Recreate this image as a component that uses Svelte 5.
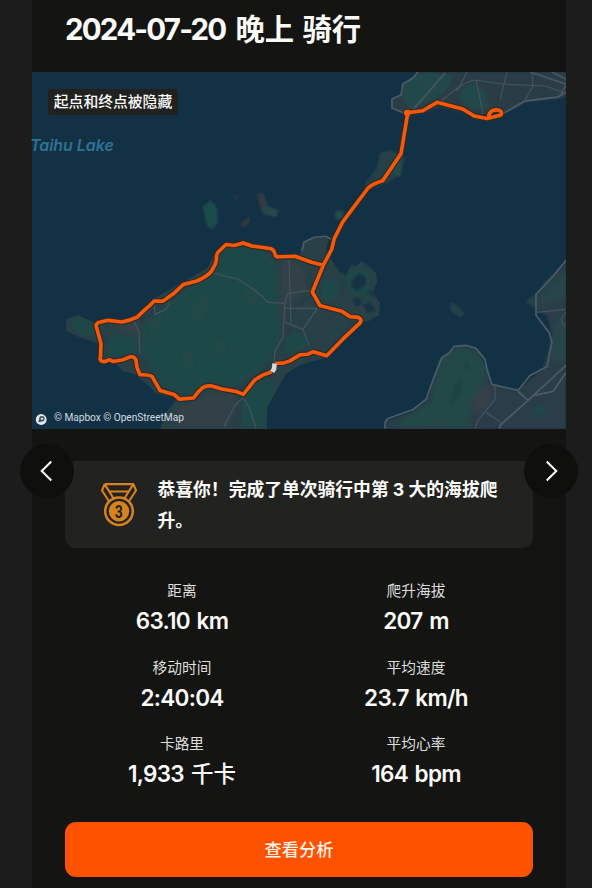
<script>
  const stats = [
    { label: '距离', value: '63.10 km' },
    { label: '爬升海拔', value: '207 m' },
    { label: '移动时间', value: '2:40:04' },
    { label: '平均速度', value: '23.7 km/h' },
    { label: '卡路里', value: '1,933', unit: '千卡' },
    { label: '平均心率', value: '164 bpm' }
  ];

  const route =
    'M271.7 371.3 L262 375 L255 379.3 L243.3 394 L236 391 L222 388.5 L211.7 385.5 Q206 385 203 387 Q198 391 193.5 397.5 L179.3 398.7 L174 394 L160 390 L152 376 Q149 374 140 374.3 L137 367 L136 359.5 Q134 355.5 130 356.5 L123.3 359.3 L113 361 L109.5 359.3 L104 361.3 Q99 361 100.5 357 L101 343 L96.5 327 Q95 323 99.5 322 L108.3 320 L121.7 321.7 Q130 320 137.3 316.7 L145 309.3 L150 305 L154 300.8 L163 300.8 L173.3 293.5 L183.3 284.2 L196.7 280.7 Q206 277 211 271.5 Q216 264 216.5 259 Q216 253 219 251 L226 244.3 L234 245.3 L243.3 242.7 L251.7 245.7 L270 248.3 Q274 249 275 254 Q275.5 257 279 256.5 L295 256 L311.7 262 L323.3 265 L312.3 291.7 L320 305.3 L341.7 311 L350 316.3 L358.3 317 Q363 319.5 359.5 323 L343.3 338.3 L326.7 355.3 L313.3 351.3 L308 353.8 L300 354.3 L290 360.5 L283.3 362.7 L275.3 362.9 M323.3 265 L331.7 249 L334.3 238.3 L342.7 221.7 L367.7 188.3 Q372 183.5 382.7 180.5 L401 153.5 L407.7 113.3 L406 112 L409 112.5 L422.7 110.7 L437 102.3 L462.7 109 L474.3 116 L487 118.5 L501 115 Q503 111 498 110 Q490 109 488.5 116.5';

  const water = '#123145';
</script>

<div class="page">
  <main class="panel">
    <h1><span class="date">2024-07-20</span> 晚上 骑行</h1>

    <div class="map">
      <svg viewBox="32 72 534 356" preserveAspectRatio="none">
        <defs>
          <filter id="soft" x="-20%" y="-20%" width="140%" height="140%"><feGaussianBlur stdDeviation="2.5" /></filter>
          <filter id="edge"><feGaussianBlur stdDeviation="0.8" /></filter>
          <clipPath id="island">
            <path d="M96 323L121 321L145 309L154 298L183 282L207 268L216 251L226 243L270 247L278 255L300 254L303 241L314 237L329 237L326 250L333 262L340 272L347 272L352 264L356 266L362 261L369 266L376 273L377 282L373 292L380 303L379 315L368 321L360 321L345 340L327 357L301 364L286 373L276 391L267 407L267 429L160 429L166 412L177 398L157 393L136 374L122 370L114 361L98 360L101 344L90 340L77 336L66 330L66 319L78 315Z" />
          </clipPath>
        </defs>
        <rect x="32" y="72" width="534" height="357" fill={water} />

        <g clip-path="url(#island)" filter="url(#edge)">
          <rect x="60" y="230" width="330" height="200" fill="#293f47" />
          <g filter="url(#soft)" fill="#1f4a47">
            <path d="M218 252L232 247L260 250L275 262L282 301L278 345L262 367L235 386L215 382L190 394L164 386L154 371L142 351L142 326L165 307L190 288L213 276Z" />
            <path d="M69 319L89 318L98 337L80 334Z M110 335L137 333L137 351L106 358Z" />
            <path d="M285 337L299 331L308 339L302 350L285 354Z M323 280L341 281L335 300L322 302Z M345 271L368 269L369 298L350 292Z M243 395L270 375L275 390L263 428L242 425Z" />
            <path d="M324 342L345 314L350 325L332 348Z" opacity=".35" />
          </g>
          <g filter="url(#soft)" fill="#344047" opacity=".7">
            <path d="M280 256L304 264L309 291L291 302L284 330L277 307Z M176 406L215 391L239 395L229 428L174 428Z M110 322L138 320L144 340L119 332Z" />
            <path d="M191 304L206 289L213 304L203 322L188 321Z M216 339L226 333L228 353L211 360Z M150 318L163 312L160 330L148 340Z M240 290L258 282L262 300L248 310Z M180 352L192 346L196 368L182 372Z M240 262L250 258L246 274Z" opacity=".35" />
          </g>
          <g fill={water}>
            <path d="M352 280L359 273L366 277L366 284L358 291L351 286Z M363 305L370 302L376 310L368 313Z M352 299L358 297L362 303L356 306Z" />
            <path d="M340 272L350 268L346 276Z M366 291L380 290L373 297Z" opacity=".6" />
          </g>
        </g>

        <g filter="url(#edge)">
          <path d="M391 100L401 94L402 84L413 77L418 72L566 72L566 97L553 99L526 102L500 115L473 115L440 107L421 114L407 115L391 108Z" fill="#2b3c46" />
          <path d="M403 98L403 84L416 75L425 72L453 75L446 90L432 101L411 109Z M461 90L473 84L484 91L489 108L472 109L459 100Z" fill="#224a48" />
          <path d="M380 153L391 150L405 157L401 172L391 181L375 187L364 185L377 167Z" fill="#263f49" />
          <path d="M393 164L402 160L401 176L394 176Z M335 211L343 210L344 217L336 220Z" fill="#214b49" />
          <path d="M203 206L211 200L217 208L218 222L213 229L207 226Z" fill="#1e4c4d" />
          <path d="M257 194L263 193L268 206L279 210L276 217L263 214Z" fill="#27464c" />
          <path d="M257 194L262 193L266 208L260 208Z M234 198L239 193L236 200Z M240 223L250 216L249 224L243 227Z" fill="#353742" />
          <path d="M450 302L457 305L465 314L460 317L451 311Z" fill="#24434b" />
          <path d="M384 429L386 420L410 412L425 402L435 374L442 357L458 345L477 349L487 366L491 383L516 391L543 368L552 335L547 315L536 310L534 302L544 282L566 261L566 429Z" fill="#2b3e48" />
          <path d="M525 301L536 293L537 310Z" fill="#243f49" />
        </g>
        <g filter="url(#soft)">
          <path d="M440 360L459 346L477 352L487 370L482 387L471 401L469 427L391 425L412 413L431 402Z" fill="#204847" />
          <path d="M538 298L566 268L566 296L539 307Z M555 322L566 318L566 360L550 365Z" fill="#264548" />
          <path d="M474 393L490 384L492 400L481 414L472 410Z" fill="#343f49" />
          <circle cx="539" cy="410" r="5" fill="#194c4d" />
          <path d="M455 385L463 375L459 397L449 407Z M465 356L470 366L465 374Z" fill="#1a4042" />
        </g>

        <g class="coast">
          <path d="M418 72L413 78L403 84L401 95L392 99L392 108L406 114" />
          <path d="M504 113L525 101L540 99L558 97L566 92" />
          <path d="M302 251L304 242L314 237L326 236L331 239" />
          <path d="M566 260L554 275L536 294L536 315L549 332L552 342L547 366L530 375L518 390L492 384L487 369L485 359L476 348L466 345L454 346L449 353L442 357L434 377L426 399L413 409L388 418Q384 421 385 428" />
          <path d="M518 391L528 400L501 424L499 428M566 365L528 400M566 372L553 391L534 395" />
        </g>
        <g class="roads">
          <path d="M467 72L460 86L441 101M456 91Q463 82 475 80L502 84L545 86L566 93M476 80L480 98L483 114M507 72L500 100M532 72L533 86L525 100" />
          <path d="M445 73L411 112M530 72L566 84M552 72L566 79M560 96L566 85" stroke-width="2" />
          <path d="M536 312L566 309M566 312L561 319L564 326M495 385L495 399L478 420L475 428M486 412L501 422" />
          <path d="M210 272L238 279L255 290L268 302L284 303M289 260L291 323M311 290L288 293L285 301L283 337L275 351L274 362M285 308L317 308L303 329L285 322M303 329L309 345M243 397L235 405L224 426M243 397L249 407L256 427" />
          <path d="M134 321L139 332L140 354M154 302L155 314L166 309L170 302" />
        </g>

        <path class="casing" d={route} />
        <path class="track" d={route} />
        <path d="M272.2 371.5L274 368.5L274.6 363.2" fill="none" stroke="#d9d9d7" stroke-width="4.6" />
        <circle cx="407.3" cy="113" r="3.2" fill="#f95809" />

        <g transform="translate(41.2 419)">
          <circle r="5.4" fill="#e3e8eb" />
          <circle cx=".7" cy="-.7" r="2.7" fill="#364954" />
          <path d="M-2.8 2.8L-1.8 -1L1 1.8Z" fill="#364954" />
          <path d="M.8 -2.7L1.4 -1.3L2.8 -.7L1.4 -.1L.8 1.3L.2 -.1L-1.2 -.7L.2 -1.3Z" fill="#e3e8eb" />
        </g>
      </svg>
      <span class="hidden-note">起点和终点被隐藏</span>
      <span class="lake">Taihu Lake</span>
      <span class="credit">© Mapbox © OpenStreetMap</span>
    </div>

    <section class="award">
      <svg class="medal" viewBox="0 0 38 46" width="38" height="46" fill="none" stroke="#d5821f" stroke-width="2.1">
        <path d="M4.6 2.1H33.4L36 8.5L29 19.2M4.6 2.1L2 8.5L9 19.2M4.6 2.1L13.8 16.8M33.4 2.1L24.2 16.8M9 9.5H29" stroke-linejoin="round" />
        <circle cx="19" cy="29.2" r="13.8" stroke-width="2.5" />
        <circle cx="19" cy="29.2" r="10.2" fill="#d5821f" stroke="none" />
        <text transform="translate(18.8 35.5) scale(.8 1)" text-anchor="middle">3</text>
      </svg>
      <p>恭喜你！完成了单次骑行中第 3 大的海拔爬升。</p>
    </section>

    <dl>
      {#each stats as stat}
        <div class="stat">
          <dt>{stat.label}</dt>
          <dd>{stat.value}{#if stat.unit}<span class="unit">{stat.unit}</span>{/if}</dd>
        </div>
      {/each}
    </dl>

    <button class="analyze">查看分析</button>
  </main>

  <button class="nav prev" aria-label="上一个">
    <svg width="54" height="54" viewBox="0 0 54 54"><path d="M31.3 17.5L21.7 27L31.3 36.5" /></svg>
  </button>
  <button class="nav next" aria-label="下一个">
    <svg width="54" height="54" viewBox="0 0 54 54"><path d="M22.7 17.5L32.3 27L22.7 36.5" /></svg>
  </button>
</div>

<style>
  :global(body) {
    background: #1c1c1c;
  }
  .page {
    position: relative;
    box-sizing: border-box;
    width: 592px;
    height: 888px;
    padding: 0 26px 0 32px;
    overflow: hidden;
    background: #1c1c1c;
    color: #fafaf8;
    font-family: Inter, 'Noto Sans CJK SC', sans-serif;
  }
  .panel {
    display: flex;
    flex-direction: column;
    height: 888px;
    background: #141412;
  }
  h1 {
    flex: none;
    box-sizing: border-box;
    height: 72px;
    margin: 0;
    padding: 7px 33px 0;
    font-size: 29.3px;
    line-height: 44px;
    font-weight: 700;
    word-spacing: 1.5px;
    white-space: nowrap;
  }
  .date {
    margin-right: 1.5px;
    font-size: 29.5px;
    letter-spacing: -1.8px;
  }
  .map {
    position: relative;
    flex: none;
    height: 356.5px;
  }
  .map > svg {
    display: block;
    width: 100%;
    height: 100%;
  }
  .coast,
  .roads {
    fill: none;
    stroke: #4c5b67;
    stroke-width: 1.7;
    stroke-linejoin: round;
  }
  .roads {
    stroke: #44535d;
    stroke-width: 1.2;
  }
  .casing,
  .track {
    fill: none;
    stroke-linejoin: round;
  }
  .casing {
    stroke: #302a25;
    stroke-width: 6;
    opacity: 0.85;
  }
  .track {
    stroke: #f95809;
    stroke-width: 3.6;
  }
  .hidden-note {
    position: absolute;
    left: 16px;
    top: 17px;
    width: 130px;
    height: 26px;
    border-radius: 3px;
    background: #212220;
    font-size: 14.8px;
    font-weight: 500;
    line-height: 26px;
    text-align: center;
    white-space: nowrap;
  }
  .lake {
    position: absolute;
    left: -2px;
    top: 63px;
    color: #2e7394;
    font-size: 16px;
    font-style: italic;
    font-weight: 600;
    line-height: 20px;
    letter-spacing: -0.05px;
    white-space: nowrap;
  }
  .credit {
    position: absolute;
    left: 22px;
    top: 338px;
    color: #d4dce0;
    font-family: Roboto, sans-serif;
    font-size: 10.2px;
    line-height: 16px;
    letter-spacing: -0.05px;
    white-space: nowrap;
  }
  .award {
    flex: none;
    display: flex;
    box-sizing: border-box;
    height: 87px;
    margin: 32.5px 33px 0;
    padding: 14px 20px 0 35px;
    border-radius: 11px;
    background: #222220;
  }
  .medal {
    flex: none;
    margin-top: 7px;
  }
  .medal text {
    fill: #222220;
    stroke: none;
    font: 700 17.5px Roboto, sans-serif;
  }
  .award p {
    margin: 0 0 0 19.5px;
    width: 345px;
    font-size: 17.8px;
    line-height: 30.5px;
    font-weight: 700;
  }
  dl {
    flex: none;
    display: grid;
    grid-template-columns: 1fr 1fr;
    margin: 30px 33px 0;
  }
  .stat {
    height: 76.7px;
    text-align: center;
  }
  dt {
    color: #dededc;
    font-size: 14.7px;
    line-height: 26px;
  }
  dd {
    margin: 1px 0 0;
    font-size: 22.5px;
    line-height: 32px;
    font-weight: 600;
    letter-spacing: -0.7px;
    word-spacing: 1.6px;
    white-space: nowrap;
  }
  .unit {
    margin-left: 7px;
    font-weight: 500;
    letter-spacing: 0;
  }
  .analyze {
    flex: none;
    height: 55px;
    margin: 13.5px 33px 0;
    padding: 0 0 1px;
    border: 0;
    border-radius: 11px;
    background: #fe5200;
    color: #fff5ec;
    font: 500 17.2px/53px 'Noto Sans CJK SC', sans-serif;
  }
  .nav {
    position: absolute;
    top: 444px;
    width: 54px;
    height: 54px;
    padding: 0;
    border: 0;
    border-radius: 50%;
    background: #0f0f0e;
  }
  .nav svg {
    display: block;
    fill: none;
    stroke: #fff;
    stroke-width: 2;
  }
  .prev {
    left: 20px;
  }
  .next {
    left: 524px;
  }
</style>
